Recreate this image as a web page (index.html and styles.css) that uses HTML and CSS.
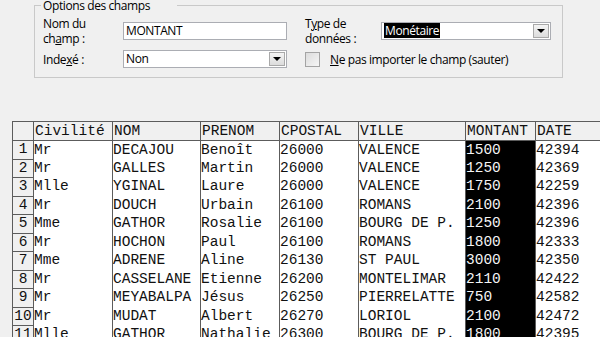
FILE: index.html
```html
<!DOCTYPE html>
<html lang="fr">
<head>
    <meta charset="UTF-8">
    <title>Assistant Importation de feuille de calcul</title>
    <link rel="stylesheet" href="styles.css">
</head>
<body>

    <div class="group">
        <span class="legend">Options des champs</span>
        <div class="fields">
            <label class="lbl">Nom du<br>ch<u>a</u>mp :</label>
            <div class="box">MONTANT</div>
            <span></span>
            <label class="lbl">T<u>y</u>pe de<br>données :</label>
            <div class="box combo">
                <span class="picked">Monétaire</span>
                <span class="drop"><i></i></span>
            </div>

            <label class="lbl">Inde<u>x</u>é :</label>
            <div class="box combo">
                Non
                <span class="drop"><i></i></span>
            </div>
            <span></span>
            <div class="skip">
                <span class="check"></span>
                <span><u>N</u>e pas importer le champ (sauter)</span>
            </div>
        </div>
    </div>

    <table class="grid">
        <colgroup>
            <col class="c-num"><col class="c-civ"><col class="c-nom"><col class="c-pre">
            <col class="c-cp"><col class="c-ville"><col class="c-mt"><col class="c-date">
        </colgroup>
        <thead>
            <tr>
                <th class="num"></th>
                <th>Civilité</th>
                <th>NOM</th>
                <th>PRENOM</th>
                <th>CPOSTAL</th>
                <th>VILLE</th>
                <th>MONTANT</th>
                <th>DATE</th>
            </tr>
        </thead>
        <tbody>
            <tr><td class="num">1</td><td>Mr</td><td>DECAJOU</td><td>Benoît</td><td>26000</td><td>VALENCE</td><td class="sel">1500</td><td>42394</td></tr>
            <tr><td class="num">2</td><td>Mr</td><td>GALLES</td><td>Martin</td><td>26000</td><td>VALENCE</td><td class="sel">1250</td><td>42369</td></tr>
            <tr><td class="num">3</td><td>Mlle</td><td>YGINAL</td><td>Laure</td><td>26000</td><td>VALENCE</td><td class="sel">1750</td><td>42259</td></tr>
            <tr><td class="num">4</td><td>Mr</td><td>DOUCH</td><td>Urbain</td><td>26100</td><td>ROMANS</td><td class="sel">2100</td><td>42396</td></tr>
            <tr><td class="num">5</td><td>Mme</td><td>GATHOR</td><td>Rosalie</td><td>26100</td><td>BOURG DE P.</td><td class="sel">1250</td><td>42396</td></tr>
            <tr><td class="num">6</td><td>Mr</td><td>HOCHON</td><td>Paul</td><td>26100</td><td>ROMANS</td><td class="sel">1800</td><td>42333</td></tr>
            <tr><td class="num">7</td><td>Mme</td><td>ADRENE</td><td>Aline</td><td>26130</td><td>ST PAUL</td><td class="sel">3000</td><td>42350</td></tr>
            <tr><td class="num">8</td><td>Mr</td><td>CASSELANE</td><td>Etienne</td><td>26200</td><td>MONTELIMAR</td><td class="sel">2110</td><td>42422</td></tr>
            <tr><td class="num">9</td><td>Mr</td><td>MEYABALPA</td><td>Jésus</td><td>26250</td><td>PIERRELATTE</td><td class="sel">750</td><td>42582</td></tr>
            <tr><td class="num">10</td><td>Mr</td><td>MUDAT</td><td>Albert</td><td>26270</td><td>LORIOL</td><td class="sel">2100</td><td>42472</td></tr>
            <tr><td class="num">11</td><td>Mlle</td><td>GATHOR</td><td>Nathalie</td><td>26300</td><td>BOURG DE P.</td><td class="sel">1800</td><td>42395</td></tr>
        </tbody>
    </table>

</body>
</html>
```
FILE: styles.css
```css
html, body {
    margin: 0;
    height: 100%;
    overflow: hidden;
}
body {
    background-color: #f0f0f0;
    font-family: 'Open Sans', 'Noto Sans', sans-serif;
    font-size: 12px;
    letter-spacing: -0.4px;
    color: #000;
}
.group {
    position: relative;
    box-sizing: border-box;
    width: 529px;
    height: 73px;
    margin: 5px 0 0 34px;
    padding: 12px 11px 5px 8px;
    border: 1px solid #c9c9c9;
}
.legend {
    position: absolute;
    top: -7px;
    left: 6px;
    padding: 0 27px 0 2px;
    background-color: #f0f0f0;
    line-height: 14px;
}
.fields {
    display: grid;
    grid-template-columns: 80px 164px 18px 76px 170px;
    grid-template-rows: 26px 26px;
    row-gap: 2px;
    align-items: center;
}
.lbl {
    line-height: 15px;
}
.box {
    position: relative;
    box-sizing: border-box;
    height: 18px;
    padding: 0 2px;
    background: #fff;
    border: 1px solid #abadb3;
    line-height: 16px;
}
.picked {
    display: inline-block;
    background: #000;
    color: #fff;
    padding: 0 1px;
    line-height: 15px;
}
.drop {
    position: absolute;
    top: 1px;
    right: 1px;
    bottom: 1px;
    width: 16px;
    box-sizing: border-box;
    border: 1px solid #a9a9a9;
    background: linear-gradient(#f4f4f4, #dcdcdc);
    display: flex;
    align-items: center;
    justify-content: center;
}
.drop i {
    width: 0;
    height: 0;
    border-left: 4px solid transparent;
    border-right: 4px solid transparent;
    border-top: 4px solid #000;
}
.skip {
    grid-column: 4 / 6;
    display: flex;
    align-items: center;
    gap: 10px;
}
.check {
    width: 15px;
    height: 15px;
    box-sizing: border-box;
    border: 1px solid #a4a4a4;
    background: linear-gradient(135deg, #dcdcdc, #f6f6f6);
}
.grid {
    margin: 43px 0 0 12px;
    border-collapse: collapse;
    table-layout: fixed;
    width: 603px;
    font-family: 'Liberation Mono', 'Courier New', monospace;
    font-size: 14.5px;
    letter-spacing: 0;
    color: #111;
}
.c-num { width: 21px; }
.c-civ { width: 79px; }
.c-nom { width: 88px; }
.c-pre { width: 79px; }
.c-cp { width: 79px; }
.c-ville { width: 107px; }
.c-mt { width: 70px; }
.c-date { width: 80px; }
.grid th, .grid td {
    padding: 0;
    height: 17.5px;
    line-height: 17px;
    white-space: nowrap;
    overflow: hidden;
    text-align: left;
    font-weight: normal;
    border-left: 1px solid #5c5c5c;
}
.grid th {
    height: 18px;
    padding-left: 1px;
    background: #f0f0f0;
    border-top: 1px solid #5c5c5c;
    border-bottom: 1px solid #5c5c5c;
}
.grid td {
    background: #fff;
}
.grid .num {
    background: #f0f0f0;
    text-align: center;
    padding: 0;
    border: 1px solid #5c5c5c;
}
.grid td.sel {
    background: #000;
    color: #f4f4f4;
}
```
